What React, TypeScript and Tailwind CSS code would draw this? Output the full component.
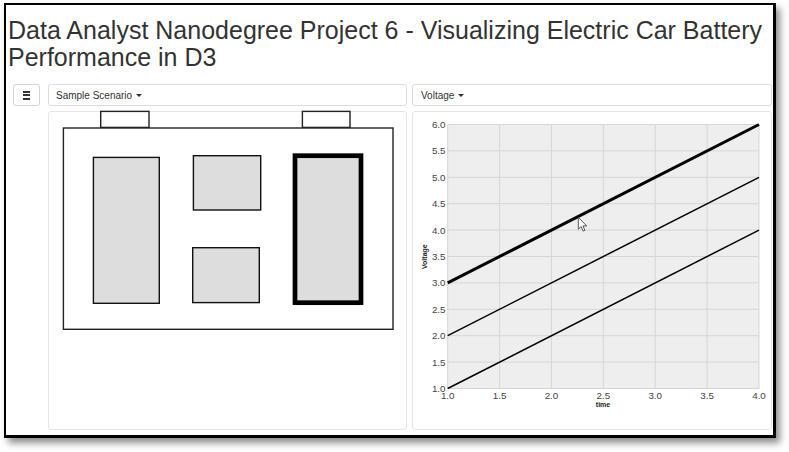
import React from "react";

const px = (t: number) => 34.7 + (t - 1) * 103.77;
const py = (v: number) => 276.5 - (v - 1) * 52.8;

function Chart() {
  const xs = [1, 1.5, 2, 2.5, 3, 3.5, 4];
  const ys = [1, 1.5, 2, 2.5, 3, 3.5, 4, 4.5, 5, 5.5, 6];
  return (
    <svg width="359" height="317" overflow="visible" className="block" style={{ fontFamily: "'Liberation Sans', Arial, sans-serif" }}>
      <rect x={px(1)} y={py(6)} width={px(4) - px(1)} height={py(1) - py(6)} fill="#eeeeee" />
      {xs.map((t) => (
        <line key={"vx" + t} x1={px(t)} x2={px(t)} y1={py(6)} y2={py(1)} stroke="#d6d6d6" strokeWidth="1" />
      ))}
      {ys.map((v) => (
        <line key={"hy" + v} x1={px(1)} x2={px(4)} y1={py(v)} y2={py(v)} stroke="#d6d6d6" strokeWidth="1" />
      ))}
      <line x1={px(1)} y1={py(1)} x2={px(4)} y2={py(4)} stroke="#000" strokeWidth="1.5" />
      <line x1={px(1)} y1={py(2)} x2={px(4)} y2={py(5)} stroke="#000" strokeWidth="1.5" />
      <line x1={px(1)} y1={py(3)} x2={px(4)} y2={py(6)} stroke="#000" strokeWidth="3" />
      {ys.map((v) => (
        <text key={"ty" + v} x={32.5} y={py(v) + 3.4} textAnchor="end" fontSize="9.8" fill="#444">
          {v.toFixed(1)}
        </text>
      ))}
      {xs.map((t) => (
        <text key={"tx" + t} x={px(t)} y={286.5} textAnchor="middle" fontSize="9.8" fill="#444">
          {t.toFixed(1)}
        </text>
      ))}
      <text x={190} y={294.5} textAnchor="middle" fontSize="7" fontWeight="bold" fill="#222">
        time
      </text>
      <text x={0} y={0} textAnchor="middle" fontSize="7" fontWeight="bold" fill="#222" transform="translate(13.5 144.7) rotate(-90)">
        Voltage
      </text>
      <path
        transform="translate(165.3 105.3)"
        d="M0 0 L0 12 L2.8 9.3 L4.9 13.8 L6.6 13 L4.6 8.6 L8.4 8.6 Z"
        fill="#fff"
        stroke="#444"
        strokeWidth="0.9"
        strokeLinejoin="round"
      />
    </svg>
  );
}

function Battery() {
  return (
    <svg width="359" height="317" overflow="visible" className="block">
      <rect x={51.7} y={-0.6} width={48.3} height={16} fill="#fff" stroke="#222" strokeWidth="1.4" />
      <rect x={253.4} y={-0.6} width={47.6} height={16} fill="#fff" stroke="#222" strokeWidth="1.4" />
      <rect x={14.4} y={16} width={329.6} height={201.3} fill="#fff" stroke="#222" strokeWidth="1.4" />
      <rect x={44.4} y={45.4} width={65.9} height={145.9} fill="#dddddd" stroke="#111" strokeWidth="1.4" />
      <rect x={144.4} y={43.7} width={67.3} height={54.3} fill="#dddddd" stroke="#111" strokeWidth="1.4" />
      <rect x={143.7} y={135.7} width={66.6} height={54.9} fill="#dddddd" stroke="#111" strokeWidth="1.4" />
      <rect x={246} y={43.7} width={66} height={147} fill="#dddddd" stroke="#000" strokeWidth="4.7" />
    </svg>
  );
}

export default function App() {
  return (
    <div className="w-[789px] h-[452px] bg-white overflow-hidden pt-[3px] pl-[4px]" style={{ fontFamily: "'Liberation Sans', Arial, sans-serif" }}>
      <div className="w-[772px] h-[435px] bg-white border-black border-t-2 border-l-2 border-r-[3px] border-b-[3px] shadow-[4px_5px_7px_rgba(0,0,0,0.45)] overflow-hidden">
        <h1 className="mt-[12px] pl-[2px] text-[25px] leading-[27px] text-[#333] font-normal">
          Data Analyst Nanodegree Project 6 - Visualizing Electric Car Battery Performance in D3
        </h1>
        <div className="mt-[13px] flex">
          <div className="ml-[7px] w-[27px] h-[22px] border border-[#d4d4d4] rounded-[3px] flex flex-col items-center justify-center gap-[1.5px] bg-white">
            <div className="w-[7px] h-[2px] bg-[#333]" />
            <div className="w-[7px] h-[2px] bg-[#333]" />
            <div className="w-[7px] h-[2px] bg-[#333]" />
          </div>
          <div className="ml-[8px] w-[359px] h-[22px] border border-[#dcdcdc] rounded-[3px] flex items-center pl-[7px] text-[10px] text-[#333]">
            Sample Scenario
            <span className="inline-block ml-[4px] w-0 h-0 border-t-[3px] border-x-[3px] border-x-transparent border-t-[#333]" />
          </div>
          <div className="ml-[5px] w-[360px] h-[22px] border border-[#dcdcdc] rounded-[3px] flex items-center pl-[8px] text-[10px] text-[#333]">
            Voltage
            <span className="inline-block ml-[4px] w-0 h-0 border-t-[3px] border-x-[3px] border-x-transparent border-t-[#333]" />
          </div>
        </div>
        <div className="mt-[5px] ml-[42px] flex">
          <div className="w-[359px] h-[319px] border border-[#e6e6e6] rounded-[3px]">
            <Battery />
          </div>
          <div className="ml-[5px] w-[360px] h-[319px] border border-[#e6e6e6] rounded-[3px]">
            <Chart />
          </div>
        </div>
      </div>
    </div>
  );
}
